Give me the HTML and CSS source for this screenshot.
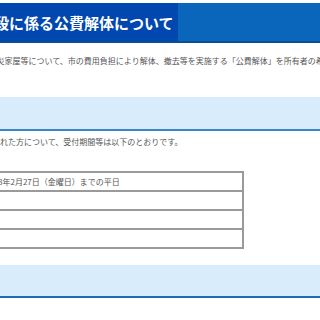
FILE: index.html
```html
<!DOCTYPE html>
<html lang="ja">
<head>
  <meta charset="utf-8">
  <link rel="stylesheet" href="styles.css">
</head>
<body>
<div class="page">
  <div class="title-bar">
    <h1>損壊家屋等の解体手段に係る公費解体について</h1>
  </div>

  <p class="lead">令和6年大雨で損壊した被災家屋等について、市の費用負担により解体、撤去等を実施する「公費解体」を所有者の希望により行います。</p>

  <div class="section">
    <h2>受付について</h2>
  </div>

  <p class="lead">公費解体の申請書を提出された方について、受付期間等は以下のとおりです。</p>

  <table class="info-table">
    <tr>
      <th>受付期間</th>
      <td>令和8年2月27日（金曜日）までの平日</td>
    </tr>
    <tr>
      <th>受付時間</th>
      <td></td>
    </tr>
    <tr>
      <th>受付場所</th>
      <td></td>
    </tr>
    <tr>
      <th>持ち物</th>
      <td></td>
    </tr>
  </table>

  <div class="section">
    <h2>申請方法</h2>
  </div>
</div>
</body>
</html>
```

FILE: styles.css
```css
body {
  margin: 0;
  background-color: #ffffff;
  font-family: "Noto Sans CJK JP", "Noto Sans", sans-serif;
  color: #555555;
  overflow: hidden;
}

/* page is scrolled sideways */
.page {
  margin-left: -150px;
  width: 600px;
}

.title-bar {
  margin-top: 3px;
  height: 38px;
  background-color: #0a66bb;
  border-bottom: 2px solid #0a4e94;
  display: flex;
}

.title-bar h1 {
  margin: 0;
  padding: 0 4px 0 9px;
  display: flex;
  align-items: center;
  background-color: #0047b0;
  font-size: 15px;
  font-weight: bold;
  color: #ffffff;
}

.lead {
  margin: 12px 0 0;
  padding-left: 54px;
  font-size: 8px;
  line-height: 12px;
  white-space: nowrap;
}

.section {
  margin-top: 30px;
  height: 32px;
  background-color: #d9ecfb;
  border-bottom: 2px solid #3a86c8;
  display: flex;
  align-items: center;
  padding-left: 12px;
}

.section h2 {
  margin: 0;
  font-size: 10px;
  color: #333333;
}

.section + .lead {
  margin-top: 5px;
}

.info-table {
  margin: 23px 0 0 54px;
  width: 340px;
  border-collapse: collapse;
  table-layout: fixed;
  font-size: 8px;
}

.info-table th,
.info-table td {
  border: 2px solid #9a9a9a;
  height: 17px;
  padding: 0 4px;
  text-align: left;
  font-weight: normal;
  white-space: nowrap;
}

.info-table th {
  width: 62px;
}

.info-table + .section {
  margin-top: 16px;
  height: 31px;
  border-bottom-color: #1f6bb6;
}
```
